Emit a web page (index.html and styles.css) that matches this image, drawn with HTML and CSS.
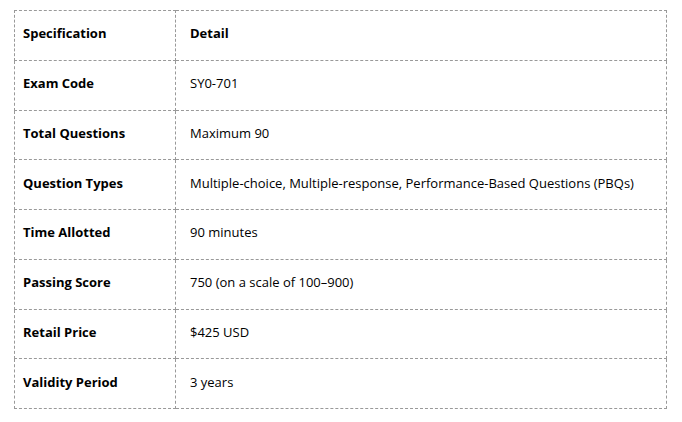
FILE: index.html
```html
<!DOCTYPE html>
<html>
<head>
<meta charset="utf-8">
<link rel="stylesheet" href="styles.css">
</head>
<body>
<table class="spec">
  <tr><th class="k">Specification</th><th class="v">Detail</th></tr>
  <tr><td class="k">Exam Code</td><td class="v">SY0-701</td></tr>
  <tr><td class="k">Total Questions</td><td class="v">Maximum 90</td></tr>
  <tr><td class="k">Question Types</td><td class="v">Multiple-choice, Multiple-response, Performance-Based Questions (PBQs)</td></tr>
  <tr><td class="k">Time Allotted</td><td class="v">90 minutes</td></tr>
  <tr><td class="k">Passing Score</td><td class="v">750 (on a scale of 100–900)</td></tr>
  <tr><td class="k">Retail Price</td><td class="v">$425 USD</td></tr>
  <tr><td class="k">Validity Period</td><td class="v">3 years</td></tr>
</table>
</body>
</html>
```
FILE: styles.css
```css
html, body { margin: 0; padding: 0; background: #fff; }
body { font-family: "Open Sans", "Noto Sans", sans-serif; font-size: 13px; color: #000; }
.spec {
  border-collapse: collapse;
  margin: 10px 0 0 14px;
  width: 653px;
}
.spec th, .spec td {
  border: 1px dashed #999;
  height: 49.75px;
  padding: 0 0 4px 0;
  text-align: left;
  vertical-align: middle;
  box-sizing: border-box;
}
.spec th { font-weight: 700; }
.spec .k { width: 161px; padding-left: 8px; font-weight: 700; }
.spec .v { padding-left: 14px; font-weight: 400; }
.spec th.v { font-weight: 700; }
```
